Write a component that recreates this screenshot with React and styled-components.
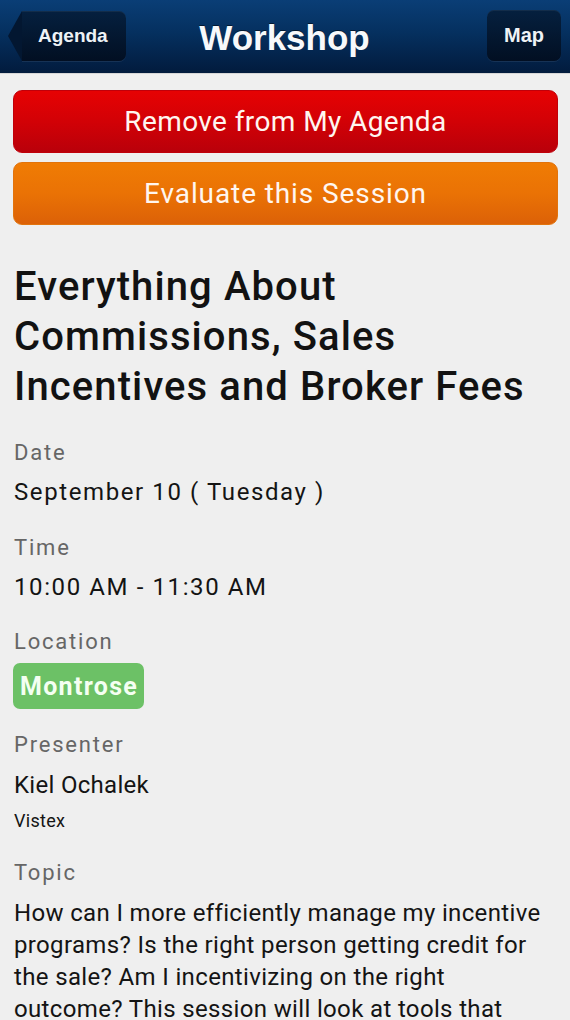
import React from "react";
import styled, { createGlobalStyle } from "styled-components";

const Global = createGlobalStyle`
  html, body { margin: 0; padding: 0; background: #efefef; }
  body { font-family: Roboto, "Noto Sans", sans-serif; -webkit-font-smoothing: antialiased; }
  * { box-sizing: border-box; }
`;

const Page = styled.div`
  width: 570px;
  height: 1020px;
  overflow: hidden;
  background: #efefef;
`;

const Header = styled.header`
  height: 74px;
  display: grid;
  grid-template-columns: 1fr auto 1fr;
  align-items: center;
  padding: 0 9px 0 8px;
  background: linear-gradient(#0a3e76 0%, #05305f 45%, #021b3d 100%);
  border-bottom: 1px solid #d6d6d6;
`;

const Title = styled.h1`
  margin: 0;
  font-family: "Liberation Sans", Arial, sans-serif;
  font-weight: bold;
  font-size: 35px;
  color: #f7f9fb;
  text-shadow: 0 -1px 0 rgba(0, 0, 0, 0.5);
  transform: translateY(1px);
`;

const NavButton = styled.button`
  position: relative;
  justify-self: ${(p) => (p.$back ? "start" : "end")};
  height: ${(p) => (p.$back ? "50px" : "51px")};
  margin-top: ${(p) => (p.$back ? "-1px" : "-2px")};
  padding: 0 17px;
  border: none;
  border-radius: 7px;
  background: linear-gradient(#05203f, #020f22);
  box-shadow: inset 0 1px 0 rgba(255, 255, 255, 0.06), 0 1px 0 rgba(255, 255, 255, 0.08);
  color: #eef2f6;
  font-family: "Liberation Sans", Arial, sans-serif;
  font-weight: bold;
  font-size: ${(p) => (p.$back ? "19px" : "20px")};
  ${(p) =>
    p.$back &&
    `
    margin-left: 14px;
    padding: 0 18px 0 16px;
    border-radius: 0 7px 7px 0;
    &::before {
      content: "";
      position: absolute;
      left: -14px;
      top: 0;
      width: 0;
      height: 0;
      border-top: 25px solid transparent;
      border-bottom: 25px solid transparent;
      border-right: 14px solid #031731;
    }
  `}
`;

const Content = styled.main`
  padding: 16px 12px 0 13px;
`;

const ActionButton = styled.button`
  display: block;
  width: 545px;
  height: 63px;
  margin-bottom: 9px;
  border: 1px solid ${(p) => (p.$tone === "red" ? "#c0000a" : "#e2730c")};
  border-radius: 9px;
  background: ${(p) =>
    p.$tone === "red"
      ? "linear-gradient(#e60203 0%, #d20106 50%, #b9000a 100%)"
      : "linear-gradient(#f07c04 0%, #ea7205 50%, #dc6107 100%)"};
  color: #fff6f0;
  font-family: Roboto, sans-serif;
  font-size: 28px;
  letter-spacing: ${(p) => (p.$tone === "red" ? "0.4px" : "0.9px")};
  padding: 0;
`;

const SessionTitle = styled.h2`
  margin: 37px 0 0 1px;
  font-family: Roboto, sans-serif;
  font-weight: 500;
  font-size: 40px;
  line-height: 50px;
  letter-spacing: 1.1px;
  color: #121212;
`;

const Field = styled.section`
  margin-top: ${(p) => p.$gap || 26}px;
  padding-left: 1px;
`;

const Label = styled.div`
  font-size: 22px;
  line-height: 30px;
  letter-spacing: 1.8px;
  color: #666;
`;

const Value = styled.div`
  margin-top: ${(p) => (p.$tight ? 10 : 9)}px;
  font-size: 24px;
  line-height: 30px;
  letter-spacing: ${(p) => (p.$tight ? "0.3px" : "1.6px")};
  color: #141414;
`;

const Sub = styled.div`
  margin-top: 9px;
  font-size: 18px;
  line-height: 24px;
  letter-spacing: 0.3px;
  color: #141414;
`;

const Pill = styled.span`
  display: inline-flex;
  align-items: center;
  height: 46px;
  margin-top: 6px;
  margin-left: -1px;
  padding: 0 6px 0 7px;
  border-radius: 7px;
  background: #6cc166;
  color: #f4fff2;
  font-weight: bold;
  font-size: 25px;
  letter-spacing: 1.3px;
`;

const Body = styled.p`
  margin: 9px 0 0;
  font-size: 24px;
  line-height: 32px;
  letter-spacing: 0.35px;
  color: #141414;
`;

export default function App() {
  return (
    <Page>
      <Global />
      <Header>
        <NavButton $back>Agenda</NavButton>
        <Title>Workshop</Title>
        <NavButton>Map</NavButton>
      </Header>
      <Content>
        <ActionButton $tone="red">Remove from My Agenda</ActionButton>
        <ActionButton $tone="orange">Evaluate this Session</ActionButton>
        <SessionTitle>
          Everything About Commissions, Sales Incentives and Broker Fees
        </SessionTitle>
        <Field $gap={26}>
          <Label>Date</Label>
          <Value>September 10 ( Tuesday )</Value>
        </Field>
        <Field>
          <Label>Time</Label>
          <Value>10:00 AM - 11:30 AM</Value>
        </Field>
        <Field $gap={25}>
          <Label>Location</Label>
          <Pill>Montrose</Pill>
        </Field>
        <Field $gap={21}>
          <Label>Presenter</Label>
          <Value $tight>Kiel Ochalek</Value>
          <Sub>Vistex</Sub>
        </Field>
        <Field $gap={25}>
          <Label>Topic</Label>
          <Body>
            How can I more efficiently manage my incentive programs? Is the right
            person getting credit for the sale? Am I incentivizing on the right
            outcome? This session will look at tools that
          </Body>
        </Field>
      </Content>
    </Page>
  );
}
